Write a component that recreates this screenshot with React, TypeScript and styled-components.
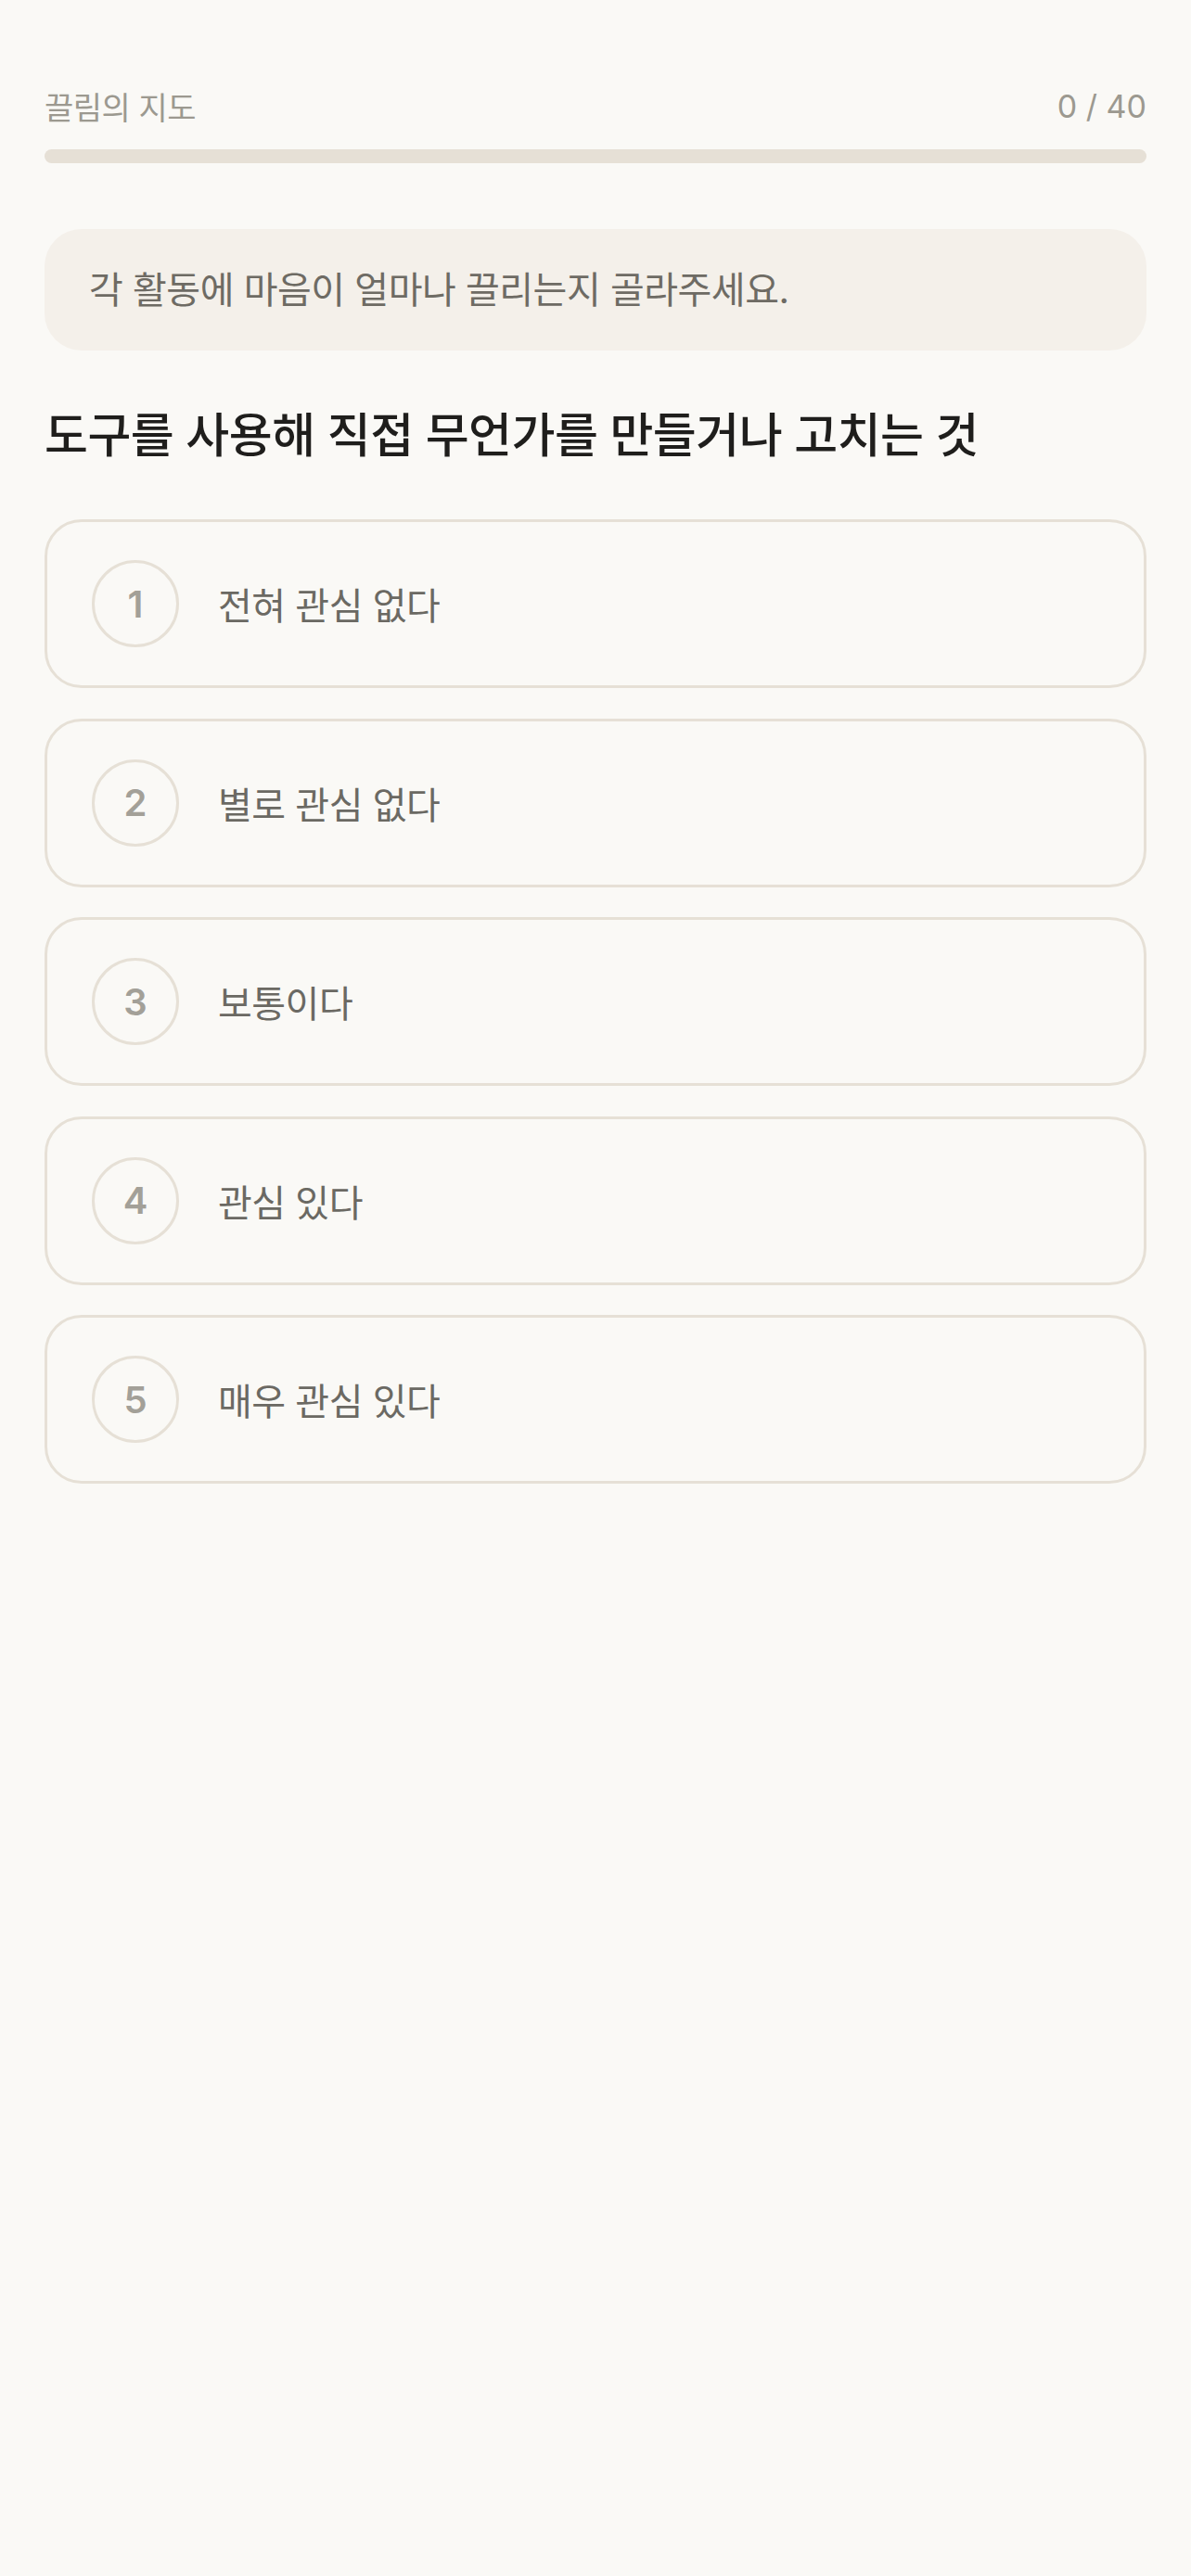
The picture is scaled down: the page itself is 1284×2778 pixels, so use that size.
import styled, { createGlobalStyle } from "styled-components";

const GlobalStyle = createGlobalStyle`
  html, body {
    margin: 0;
    padding: 0;
    background: #faf9f6;
  }
  body {
    font-family: Inter, "Noto Sans CJK KR", sans-serif;
    -webkit-font-smoothing: antialiased;
  }
`;

const StyledPage = styled.div`
  min-height: 2778px;
  padding: 88px 48px 0 48px;
  box-sizing: border-box;
  background: #faf9f6;
`;

const StyledHeader = styled.div`
  display: flex;
  justify-content: space-between;
  align-items: center;
  height: 52px;
`;

const StyledTitle = styled.span`
  font-size: 34px;
  color: #9c9990;
  letter-spacing: -0.5px;
`;

const StyledCount = styled.span`
  font-size: 34px;
  color: #9c9990;
`;

const StyledTrack = styled.div`
  margin-top: 21px;
  height: 15px;
  border-radius: 8px;
  background: #e6e0d6;
  overflow: hidden;
`;

const StyledFill = styled.div`
  height: 100%;
  background: #bfb39f;
`;

const StyledNotice = styled.div`
  margin-top: 71px;
  height: 131px;
  box-sizing: border-box;
  padding: 0 48px 5px 48px;
  display: flex;
  align-items: center;
  border-radius: 40px;
  background: #f4f0ea;
  font-size: 40px;
  color: #6e6b64;
  letter-spacing: -0.5px;
`;

const StyledQuestion = styled.h1`
  margin: 56px 0 0 0;
  font-size: 51px;
  line-height: 72px;
  font-weight: 500;
  color: #1f1e1c;
  letter-spacing: -0.5px;
`;

const StyledOptions = styled.div`
  margin-top: 54px;
  display: flex;
  flex-direction: column;
  gap: 32.5px;
`;

const StyledOption = styled.button`
  display: flex;
  align-items: center;
  gap: 42px;
  height: 182px;
  padding: 0 48px;
  box-sizing: border-box;
  border: 3px solid #e6e0d6;
  border-radius: 40px;
  background: #faf9f6;
  font-family: inherit;
  text-align: left;
  cursor: pointer;
`;

const StyledBadge = styled.span`
  flex: none;
  width: 94px;
  height: 94px;
  box-sizing: border-box;
  border-radius: 50%;
  border: 3px solid #e6e0d6;
  display: flex;
  align-items: center;
  justify-content: center;
  font-size: 40px;
  font-weight: 600;
  color: #a3a098;
`;

const StyledLabel = styled.span`
  font-size: 40px;
  color: #6b6963;
  letter-spacing: -0.5px;
`;

const options = ["전혀 관심 없다", "별로 관심 없다", "보통이다", "관심 있다", "매우 관심 있다"];

export default function App() {
  const answered = 0;
  const total = 40;

  return (
    <>
      <GlobalStyle />
      <StyledPage>
        <StyledHeader>
          <StyledTitle>끌림의 지도</StyledTitle>
          <StyledCount>
            {answered} / {total}
          </StyledCount>
        </StyledHeader>
        <StyledTrack>
          <StyledFill style={{ width: `${(answered / total) * 100}%` }} />
        </StyledTrack>

        <StyledNotice>각 활동에 마음이 얼마나 끌리는지 골라주세요.</StyledNotice>

        <StyledQuestion>도구를 사용해 직접 무언가를 만들거나 고치는 것</StyledQuestion>

        <StyledOptions>
          {options.map((label, key) => (
            <StyledOption key={key}>
              <StyledBadge>{key + 1}</StyledBadge>
              <StyledLabel>{label}</StyledLabel>
            </StyledOption>
          ))}
        </StyledOptions>
      </StyledPage>
    </>
  );
}
